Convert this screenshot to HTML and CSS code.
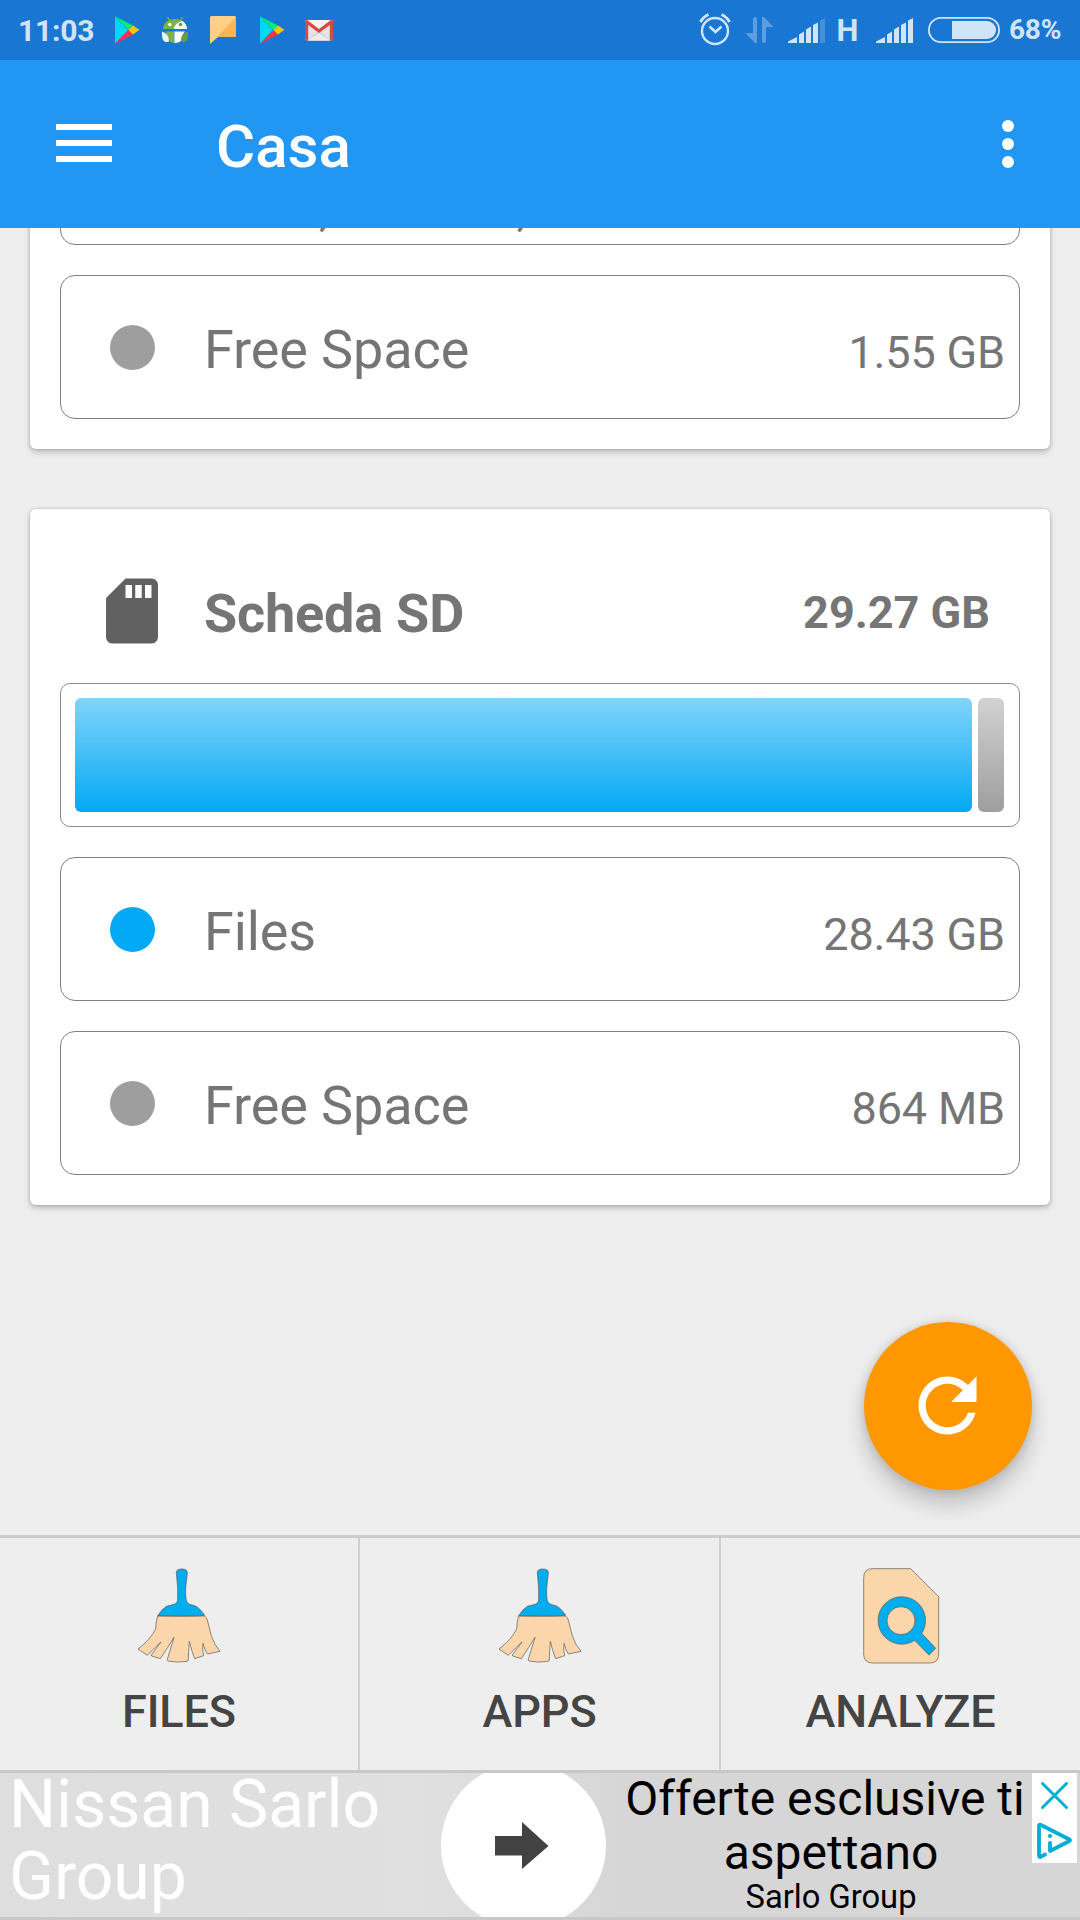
FILE: index.html
```html
<!DOCTYPE html>
<html lang="it">
<head>
<meta charset="utf-8">
<title>Casa</title>
<link rel="stylesheet" href="styles.css">
</head>
<body>
<svg class="defs" width="0" height="0" aria-hidden="true">
  <symbol id="play" viewBox="0 0 26 28">
    <path fill="#00d8f5" d="M1 .5 14 14 1 27.500z"/>
    <path fill="#00ee76" d="M1 .3 19 9.500 14.500 14z"/>
    <path fill="#ff3148" d="M1 27.700 19 18.500 14.500 14z"/>
    <path fill="#ffc400" d="M19 9.500 25.500 13.800 19 18.500 14.500 14z"/>
  </symbol>
  <symbol id="broom" viewBox="90 141 294 294">
    <path class="outlined skin" d="M173 288H314Q319 292 322 300L334 347Q342 374 360 394L322 402Q314 390 309 370Q306 388 311 407L284 416Q275 394 268 364Q265 396 265 420Q264 424 261 424Q232 429 204 423Q201 422 202 418L222 352Q205 380 181 416L155 408Q153 405 156 402L183 366Q165 382 142 406L114 387Q150 360 167 327Q167 308 173 288z"/>
    <path class="outlined blue" d="M229 158Q229 147 245 147Q262 147 262 158L257 205Q256 238 261 247Q266 254 284 257Q298 262 314 286Q270 290 173 287Q185 268 199 259Q212 256 225 252Q233 248 233 240V205z"/>
  </symbol>
</svg>

<div class="screen">
  <header class="status">
    <div class="status-left">
      <span class="clock">11:03</span>
      <svg class="play-a" width="26" height="28"><use href="#play"/></svg>
      <svg class="droid" width="28" height="28" viewBox="0 0 28 28">
        <path d="M9 5 6.500 1.200M19 5l2.500-3.800" stroke="#7cb342" stroke-width="1.300"/>
        <path fill="#7cb342" d="M14 3C6.500 3 2.500 7 2 13h24C25.500 7 21 3 14 3z"/>
        <path fill="#f4f6f4" d="M12.500 13C13.500 9 16.500 6 21.500 5Q26 8.500 26 13z"/>
        <circle cx="8.800" cy="8.500" r="1.700" fill="#fff"/><circle cx="19.500" cy="8.500" r="1.700" fill="#689f38"/>
        <path fill="#7cb342" d="M4 15.500h9.500V27Q9 27 8 24 7 19 4 15.500z"/>
        <path fill="#fff" d="M13.500 15.500H24Q20.500 19 20 25q-2.500 2-6.500 2z"/>
        <path fill="#f1f3f1" d="M1 15.500q7 2 7 10-5 2-6.500-3Q.5 19 1 15.500z"/>
        <path fill="#689f38" d="M27 15.500q-7 2-7 10 5 2 6.500-3 1-3.500.5-7z"/>
      </svg>
      <svg class="chat" width="26" height="28" viewBox="0 0 26 28">
        <path fill="#ffcf87" d="M1.500 0h23Q26 0 26 1.500v18q0 1.500-1.500 1.500H8l-8 7V1.500Q0 0 1.500 0z"/>
        <path fill="#fbb554" d="M26 1v18.500q0 1.500-1.500 1.500H7z"/>
      </svg>
      <svg class="play-b" width="26" height="28"><use href="#play"/></svg>
      <svg class="mail" width="28" height="21" viewBox="0 0 28 21">
        <rect width="28" height="20.500" rx="2" fill="#e4e4e4"/>
        <path fill="#f5f5f5" d="M3 0h22L14 9z"/>
        <path fill="#d0d0d0" d="M3 20.500 14 10l11 10.500z"/>
        <path fill="#ececec" d="M3 20.500 14 13l11 7.500z"/>
        <path fill="#d54b3d" d="M2 0 14 9 26 0q2 0 2 2v16.500q0 2-2 2h-1.200V5L14 13 3.200 5v15.500H2q-2 0-2-2V2Q0 0 2 0z"/>
      </svg>
    </div>
    <svg class="status-right" width="326" height="60" viewBox="699 0 326 60">
      <g fill="none" stroke="#d1e4f6">
        <circle cx="715" cy="31" r="13" stroke-width="2.400"/>
        <path d="M709.500 26.500 715.500 32 721.500 26.500" stroke-width="2.600"/>
        <path d="M700.500 22Q703 17 708.500 14.500M729.500 22Q727 17 721.500 14.500" stroke-width="3"/>
      </g>
      <path fill="#5c9edf" d="M753 19q0-2 2-2t2 2v24h-2L746 33.500V33h7zM762 17h2l9 9.500v.5h-7v14q0 2-2 2t-2-2z"/>
      <g fill="#d1e4f6">
        <path d="M788 43v-1.500L797 37v6zM799 43V34.500l5-3V43zM806 43V29.500l5-3V43zM813 43V25l5-2.500V43z"/>
        <path class="last-bar" d="M820 43V20.500l5-2.500v25z"/>
      </g>
      <g fill="#d1e4f6">
        <path d="M876 43v-1.500L885 37v6zM887 43V34.500l5-3V43zM894 43V29.500l5-3V43zM901 43V25l5-2.500V43zM908 43V20.500l5-2.500v25z"/>
        <path d="M952 21h35a9 9 0 0 1 0 18h-35z"/>
      </g>
      <rect x="928.900" y="17.900" width="70.200" height="24.200" rx="12.100" fill="none" stroke="#d1e4f6" stroke-width="1.800"/>
      <text class="net" x="836.500" y="41">H</text>
    </svg>
    <span class="percent">68%</span>
  </header>

  <nav class="appbar">
    <svg class="burger" width="56" height="38" viewBox="0 0 56 38" fill="#fff"><path d="M0 0h56v6H0zM0 16h56v6H0zM0 32h56v6H0z"/></svg>
    <h1>Casa</h1>
    <svg class="more" width="12" height="48" viewBox="0 0 12 48" fill="#fff"><circle cx="6" cy="6" r="6"/><circle cx="6" cy="24" r="6"/><circle cx="6" cy="42" r="6"/></svg>
  </nav>

  <main class="content">
    <section class="card card-first">
      <div class="row row-details"><span>,</span><span>,</span></div>
      <div class="row"><i class="dot"></i><span class="label">Free Space</span><span class="value">1.55 GB</span></div>
    </section>

    <section class="card">
      <div class="card-head">
        <svg width="78" height="78" viewBox="0 0 24 24" fill="#616161"><path d="M18 2h-8L4.020 8 4 20c0 1.100.9 2 2 2h12c1.100 0 2-.9 2-2V4c0-1.100-.9-2-2-2zm-6 6h-2V4h2v4zm3 0h-2V4h2v4zm3 0h-2V4h2v4z"/></svg>
        <h2>Scheda SD</h2>
        <strong>29.27 GB</strong>
      </div>
      <div class="usage"><div class="used"></div><div class="free"></div></div>
      <div class="row"><i class="dot dot-files"></i><span class="label">Files</span><span class="value">28.43 GB</span></div>
      <div class="row"><i class="dot"></i><span class="label">Free Space</span><span class="value">864 MB</span></div>
    </section>

    <button class="fab" aria-label="Refresh">
      <svg width="87" height="87" viewBox="0 0 24 24" fill="#fff"><path d="M17.650 6.350A7.958 7.958 0 0 0 12 4c-4.420 0-7.990 3.580-7.990 8s3.570 8 7.990 8c3.730 0 6.840-2.550 7.730-6h-2.080A5.990 5.990 0 0 1 12 18c-3.310 0-6-2.690-6-6s2.690-6 6-6c1.660 0 3.140.69 4.220 1.780L13 11h7V4l-2.350 2.350z"/></svg>
    </button>
  </main>

  <div class="tabs">
    <div class="tab"><svg width="98" height="98"><use href="#broom"/></svg><span>FILES</span></div>
    <div class="tab"><svg width="98" height="98"><use href="#broom"/></svg><span>APPS</span></div>
    <div class="tab">
      <svg width="98" height="98" viewBox="213 141 294 294">
        <path class="outlined skin" d="M275 146H389L473 230V402Q473 429 446 429H275Q248 429 248 402V173Q248 146 275 146z"/>
        <path class="outlined blue" fill-rule="evenodd" d="M422 340 464 385 444 405 401 361A71 71 0 1 1 422 340zM402 302A42 42 0 1 0 318 302A42 42 0 1 0 402 302z"/>
      </svg>
      <span>ANALYZE</span>
    </div>
  </div>

  <aside class="ad">
    <div class="ad-brand">Nissan Sarlo<br>Group</div>
    <div class="ad-go">
      <svg width="54" height="48" viewBox="0 0 54 48" fill="#424242"><path d="M0 14h27V0l26.500 24L27 47V33.500H0z"/></svg>
    </div>
    <div class="ad-copy">
      <p class="offer">Offerte esclusive ti</p>
      <p>aspettano</p>
      <p class="sponsor">Sarlo Group</p>
    </div>
    <div class="ad-badge">
      <svg width="45" height="90" viewBox="0 0 45 90" fill="none" stroke="#00aed6" stroke-linecap="round" stroke-linejoin="round">
        <path d="M10.500 10.500 34.500 34.500M34.500 10.500 10.500 34.500" stroke-width="3"/>
        <path d="M13 81.500 8 84Q7 84 7 82V53Q7 51 9 52L37.500 66.500Q38.500 67.300 37.500 68L18 78V70" stroke-width="3.800"/>
        <path d="M18 63h.01" stroke-width="4.200"/>
      </svg>
    </div>
  </aside>
</div>
</body>
</html>
```

FILE: styles.css
```css
* { box-sizing: border-box; }
body { margin: 0; font-family: Roboto, "Liberation Sans", sans-serif; background: #eee; }
h1, h2, p { margin: 0; }
svg { display: block; flex: none; }
.defs { position: absolute; }

.screen {
  width: 1080px;
  height: 1920px;
  display: flex;
  flex-direction: column;
  overflow: hidden;
}

/* Status bar */
.status {
  height: 60px;
  flex: none;
  display: flex;
  align-items: center;
  justify-content: space-between;
  padding-left: 18px;
  background: #1976d2;
  color: #d1e4f6;
}
.status-left { display: flex; align-items: center; flex: 1; }
.clock { width: 96px; font-size: 30px; font-weight: 700; line-height: 61px; letter-spacing: -.2px; }
.play-b { margin-left: 23px; }
.droid { margin-left: 21px; }
.chat { margin-left: 21px; }
.mail { margin-left: 20px; }
.status-right { margin-right: -16px; }
.last-bar { fill: #468fdb; }
.net { font-size: 31px; font-weight: 700; fill: #d1e4f6; }
.percent { width: 71px; font-size: 28px; font-weight: 700; line-height: 62px; letter-spacing: -.2px; }

/* App bar */
.appbar {
  height: 168px;
  flex: none;
  display: flex;
  align-items: center;
  padding: 0 66px 0 56px;
  background: #2196f3;
}
.burger { margin-bottom: 2px; }
.appbar h1 {
  margin-left: 104px;
  flex: 1;
  color: #fff;
  font-size: 60px;
  font-weight: 500;
  line-height: 80px;
  padding-top: 5px;
}

/* Storage cards */
.content {
  position: relative;
  flex: 1;
  min-height: 0;
  padding: 0 30px;
  overflow: hidden;
  color: #757575;
}
.card {
  display: flex;
  flex-direction: column;
  gap: 30px;
  padding: 0 30px 30px;
  background: #fff;
  border-radius: 6px;
  box-shadow: 0 3px 6px rgba(0, 0, 0, .22), 0 0 3px rgba(0, 0, 0, .2);
}
.card-first { margin: -157px 0 60px; padding-top: 30px; }

.row {
  height: 144px;
  flex: none;
  display: flex;
  align-items: baseline;
  padding: 0 14px 0 49px;
  border: 1px solid #808080;
  border-radius: 15px;
}
.dot { width: 45px; height: 45px; align-self: center; margin-top: 1px; border-radius: 50%; background: #9e9e9e; }
.dot-files { background: #03a9f4; }
.label { flex: 1; margin-left: 49px; font-size: 54px; line-height: 147px; letter-spacing: -.1px; }
.value { font-size: 45px; letter-spacing: -.15px; }
.row-details { gap: 189px; padding: 84px 0 0 258px; font-size: 45px; line-height: 50px; }

.card-head {
  height: 174px;
  flex: none;
  display: flex;
  align-items: center;
  padding: 30px 30px 0 33px;
  margin-bottom: -30px;
}
.card-head h2 { flex: 1; margin-left: 33px; padding-top: 5px; font-size: 54px; font-weight: 700; letter-spacing: -.2px; }
.card-head strong { padding-top: 3px; font-size: 45px; }

.usage {
  height: 144px;
  flex: none;
  display: flex;
  gap: 6px;
  padding: 14px 15px 14px 14px;
  border: 1px solid #8c8c8c;
  border-radius: 10px;
}
.used { flex: 1; border-radius: 6px; background: linear-gradient(#81d4fa, #03a9f4); }
.free { width: 26px; border-radius: 6px; background: linear-gradient(#d2d2d2, #9e9e9e); }

.fab {
  position: absolute;
  right: 48px;
  bottom: 45px;
  width: 168px;
  height: 168px;
  display: flex;
  align-items: center;
  justify-content: center;
  padding: 0 1px 1px 0;
  border: 0;
  border-radius: 50%;
  background: #ff9800;
  box-shadow: 0 14px 22px rgba(0, 0, 0, .2), 0 0 10px rgba(0, 0, 0, .13);
}

/* Bottom actions */
.tabs {
  height: 238px;
  flex: none;
  display: grid;
  grid-template-columns: 360px 361px 359px;
  border-top: 3px solid #ccc;
  border-bottom: 3px solid #c8c8c8;
}
.tab {
  display: flex;
  flex-direction: column;
  align-items: center;
  padding-top: 29px;
  border-right: 2px solid #d0d0d0;
}
.tab:last-child { border-right: 0; }
.tab span { margin-top: 21px; color: #444; font-size: 45px; font-weight: 500; line-height: 52px; letter-spacing: -.1px; }
.outlined { stroke: #555; stroke-width: 2; }
.skin { fill: #fad6aa; }
.blue { fill: #00adef; }

/* Ad banner */
.ad {
  position: relative;
  height: 147px;
  flex: none;
  display: flex;
  border-bottom: 3px solid #c8c8c8;
  background: linear-gradient(90deg, #dedede, #e0e0e0 420px, #d6d6d6 620px);
  overflow: hidden;
}
.ad-brand { width: 441px; padding-left: 9px; color: #fff; font-size: 66px; line-height: 72px; margin-top: -4px; white-space: nowrap; }
.ad-go {
  width: 165px;
  height: 165px;
  flex: none;
  display: flex;
  align-items: center;
  justify-content: center;
  margin: -10px 1px -10px 0;
  padding-right: 3px;
  border-radius: 50%;
  background: #fff;
}
.ad-copy { width: 448px; flex: none; color: #000; text-align: center; font-size: 48px; line-height: 54px; margin-top: -1px; }
.ad-copy .offer { padding-right: 12px; }
.ad-copy .sponsor { font-size: 32.7px; line-height: 34px; }
.ad-badge { position: absolute; top: 0; right: 3px; background: #fff; }
```
